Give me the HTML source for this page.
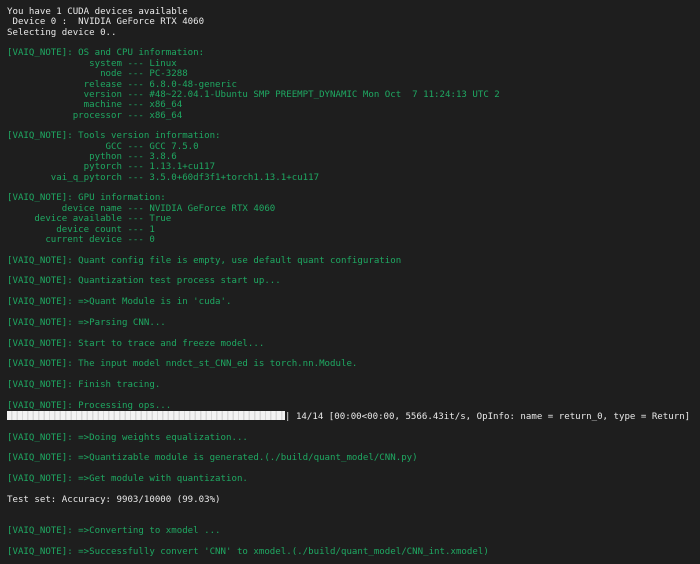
<!DOCTYPE html>
<html><head><meta charset="utf-8"><style>
html,body{margin:0;padding:0;background:#1e1e1e;width:700px;height:564px;overflow:hidden}
pre{margin:0;padding:7px 0 0 7px;font-family:"DejaVu Sans Mono","Liberation Mono",monospace;font-size:9.1px;line-height:10.36px;color:#e8e8e8;white-space:pre}
.g{color:#1fa862}
.bar{display:inline-block;width:278px;height:9px;vertical-align:-1px;background:repeating-linear-gradient(90deg,#f2f2f2 0,#f2f2f2 4px,#d8d8d8 4px,#d8d8d8 5.4px)}
</style></head><body><pre>You have 1 CUDA devices available
 Device 0 :  NVIDIA GeForce RTX 4060
Selecting device 0..

<span class="g">[VAIQ_NOTE]: OS and CPU information:
               system --- Linux
                 node --- PC-3288
              release --- 6.8.0-48-generic
              version --- #48~22.04.1-Ubuntu SMP PREEMPT_DYNAMIC Mon Oct  7 11:24:13 UTC 2
              machine --- x86_64
            processor --- x86_64

[VAIQ_NOTE]: Tools version information:
                  GCC --- GCC 7.5.0
               python --- 3.8.6
              pytorch --- 1.13.1+cu117
        vai_q_pytorch --- 3.5.0+60df3f1+torch1.13.1+cu117

[VAIQ_NOTE]: GPU information:
          device name --- NVIDIA GeForce RTX 4060
     device available --- True
         device count --- 1
       current device --- 0

[VAIQ_NOTE]: Quant config file is empty, use default quant configuration

[VAIQ_NOTE]: Quantization test process start up...

[VAIQ_NOTE]: =&gt;Quant Module is in 'cuda'.

[VAIQ_NOTE]: =&gt;Parsing CNN...

[VAIQ_NOTE]: Start to trace and freeze model...

[VAIQ_NOTE]: The input model nndct_st_CNN_ed is torch.nn.Module.

[VAIQ_NOTE]: Finish tracing.

[VAIQ_NOTE]: Processing ops...</span>
<span class="bar"></span>| 14/14 [00:00&lt;00:00, 5566.43it/s, OpInfo: name = return_0, type = Return]

<span class="g">[VAIQ_NOTE]: =&gt;Doing weights equalization...

[VAIQ_NOTE]: =&gt;Quantizable module is generated.(./build/quant_model/CNN.py)

[VAIQ_NOTE]: =&gt;Get module with quantization.</span>

Test set: Accuracy: 9903/10000 (99.03%)


<span class="g">[VAIQ_NOTE]: =&gt;Converting to xmodel ...

[VAIQ_NOTE]: =&gt;Successfully convert 'CNN' to xmodel.(./build/quant_model/CNN_int.xmodel)</span>
</pre></body></html>
